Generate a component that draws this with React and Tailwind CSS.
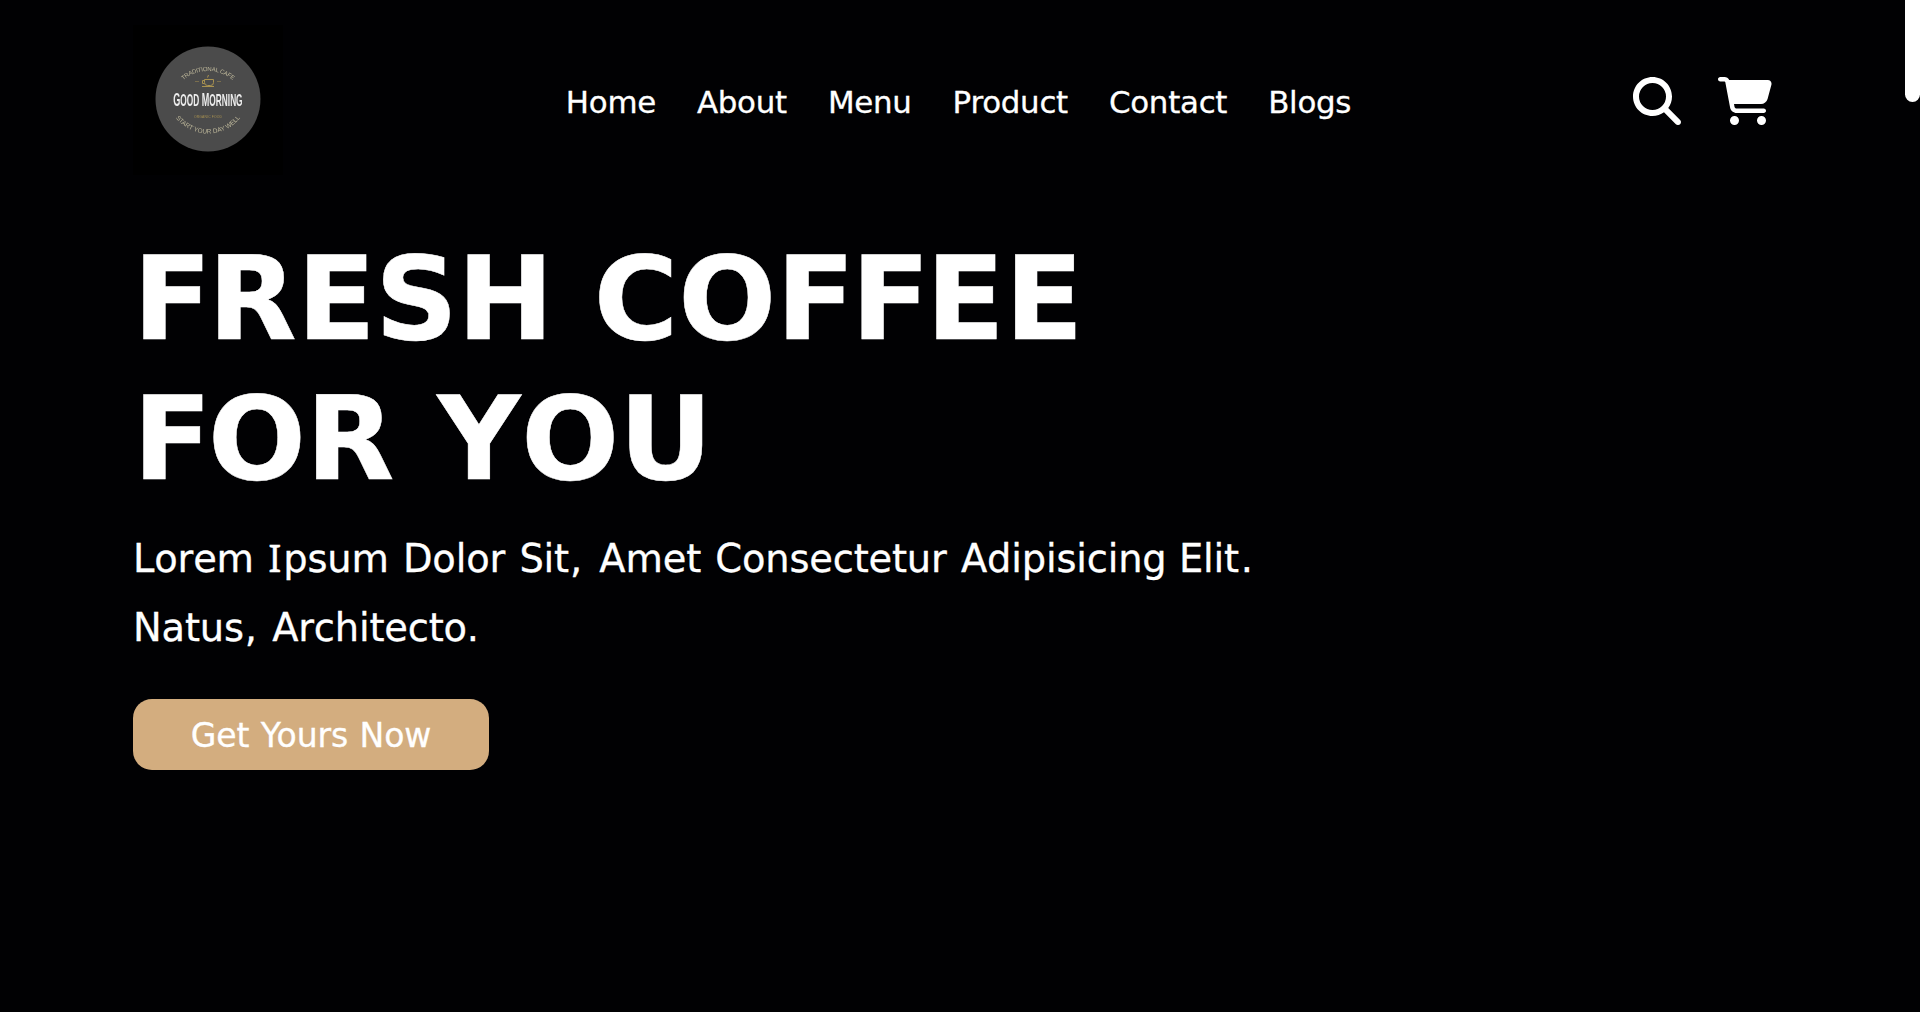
import { FaMagnifyingGlass, FaCartShopping } from "react-icons/fa6";

const links = ["Home", "About", "Menu", "Product", "Contact", "Blogs"];

function Logo() {
  return (
    <svg viewBox="0 0 150 150" className="h-[150px] w-[150px] bg-black" role="img" aria-label="Good Morning">
      <defs>
        <path id="arc-top" d="M37 84 A38 38 0 0 1 113 84" />
        <path id="arc-bottom" d="M34 67.5 A41 41 0 0 0 116 67.5" />
      </defs>
      <g className="blur-[0.35px]">
        <circle cx="75" cy="74" r="52.5" fill="#4b4b4b" />
        <g fontFamily="Liberation Sans" fill="#bdb79a">
          <text fontSize="6">
            <textPath href="#arc-top" startOffset="50%" textAnchor="middle" textLength="54">TRADITIONAL CAFE</textPath>
          </text>
          <text fontSize="6.4">
            <textPath href="#arc-bottom" startOffset="50%" textAnchor="middle" textLength="74">START YOUR DAY WELL</textPath>
          </text>
          <text x="75" y="92.5" fontSize="3.4" fill="#a99250" textAnchor="middle" textLength="28">ORGANIC FOOD</text>
        </g>
        <g stroke="#a99250" strokeWidth="1" fill="none">
          <path d="M71.500 54.500h9v3a3 3 0 0 1-3 3h-3a3 3 0 0 1-3-3zM71.500 55.500h-2v3h2M69 61.500h12M74.500 52.500l1-2.500" />
          <path d="M62 56.500h4M84 56.500h4" opacity="0.5" />
        </g>
        <text
          transform="translate(40.3 80.8) scale(0.63 1)"
          fontFamily="Liberation Sans"
          fontWeight="700"
          fill="#ececec"
          fontSize="17.5"
          textLength="110"
          lengthAdjust="spacingAndGlyphs"
        >
          G<tspan fontSize="16">OOD</tspan> M<tspan fontSize="16">ORNING</tspan>
        </text>
      </g>
    </svg>
  );
}

function Header() {
  return (
    <header className="flex h-[200px] items-start justify-between px-[133px] pt-[25px]">
      <Logo />
      <nav className="mt-[57px] ml-px flex gap-[41px] text-[30.9px] leading-10 tracking-[-0.009em] [-webkit-text-stroke:0.3px_white]">
        {links.map((label) => (
          <a key={label} href="#">{label}</a>
        ))}
      </nav>
      <div className="mt-[52px] flex gap-[37px]">
        <FaMagnifyingGlass className="h-12 w-12" />
        <FaCartShopping className="h-12 w-[54px]" />
      </div>
    </header>
  );
}

function Hero() {
  return (
    <section className="flex flex-col items-start pt-[29px] pl-[133px]">
      <h1 className="text-[115.2px] leading-[140px] font-bold [-webkit-text-stroke:0.5px_white] [font-kerning:none]">
        <span className="tracking-[-0.033em]">F</span>
        <span className="tracking-[0.004em]">R</span>
        <span className="tracking-[-0.006em]">ES</span>H CO
        <span className="tracking-[-0.033em]">FF</span>EE
        <br />
        <span className="tracking-[-0.033em]">F</span>O
        <span className="tracking-[0.022em]">R</span> <span className="tracking-[0.005em]">Y</span>OU
      </h1>
      <p className="mt-[15px] text-[38.4px] leading-[69.12px] tracking-[-0.0045em] [-webkit-text-stroke:0.3px_white] [font-kerning:none] [word-spacing:0.06em]">
        Lorem <span className="mr-[2px] font-['Noto_Sans'] text-[39px] leading-none">I</span>psum Dolor Sit
        <span className="mr-[3px] ml-[1px]">,</span> Amet Consectetur Adipisicing <span className="-ml-[2px]">Elit</span>
        <span className="ml-[2px]">.</span>
        <br />
        Natus<span className="mr-[1px] ml-[1px]">,</span> Architecto.
      </p>
      <button className="mt-[37px] h-[71px] w-[356px] rounded-[19px] bg-[#d3ad7f] pt-[2px] text-[33.1px] tracking-[-0.004em] [-webkit-text-stroke:0.3px_white] [word-spacing:0.034em]">
        Get Yours Now
      </button>
    </section>
  );
}

export default function App() {
  return (
    <div className="relative h-[1012px] w-full overflow-hidden bg-[#010103] font-['DejaVu_Sans',sans-serif] text-white">
      <div className="w-[1905px]">
        <Header />
        <Hero />
      </div>
      <div className="absolute top-0 right-0 h-[102px] w-[15px] rounded-b-[8px] bg-white" />
    </div>
  );
}
